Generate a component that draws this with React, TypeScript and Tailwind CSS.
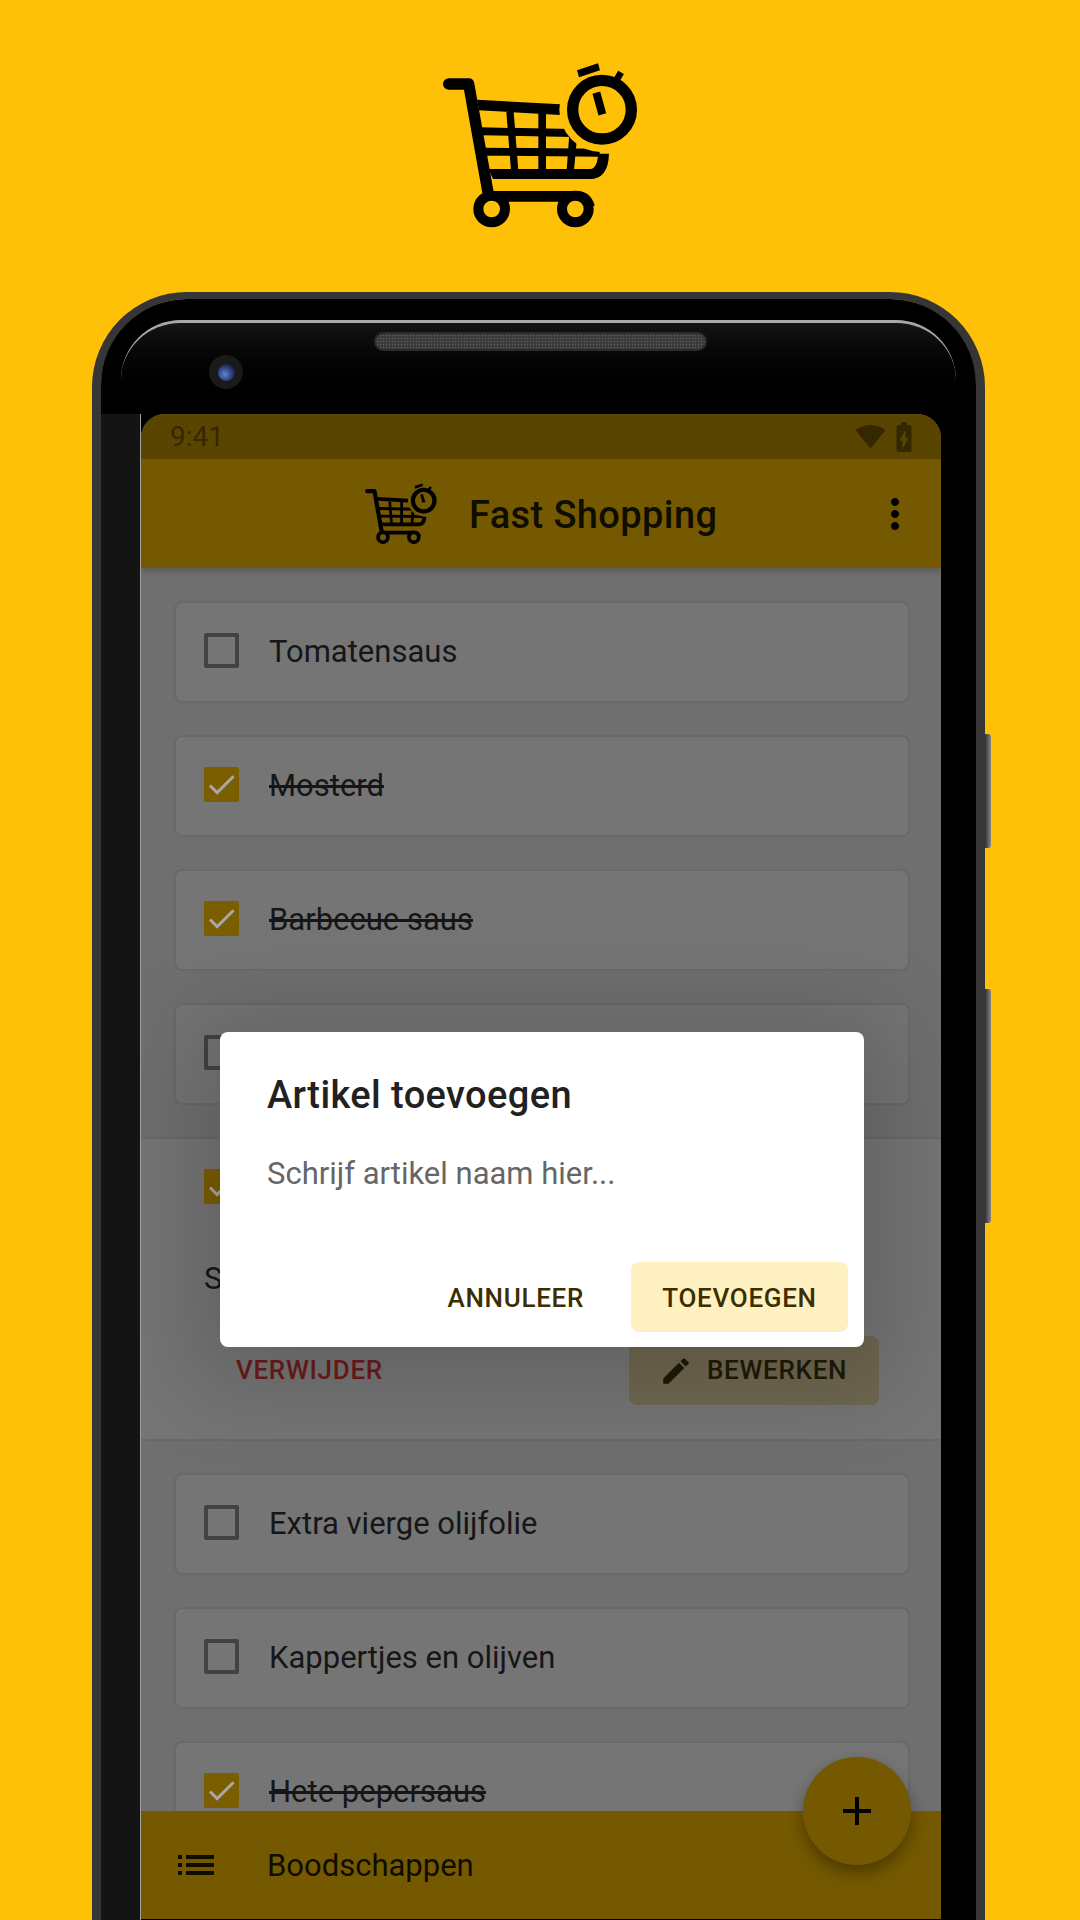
import { MdAdd, MdBatteryChargingFull, MdCheck, MdEdit, MdList, MdMoreVert, MdSignalWifi4Bar } from "react-icons/md";

const FONT = "font-['Roboto','Liberation_Sans',sans-serif]";

const ITEMS_TOP = [
  { label: "Tomatensaus", done: false },
  { label: "Mosterd", done: true },
  { label: "Barbecue saus", done: true },
  { label: "", done: false },
];

const ITEMS_BOTTOM = [
  { label: "Extra vierge olijfolie", done: false },
  { label: "Kappertjes en olijven", done: false },
  { label: "Hete pepersaus", done: true },
];

function Logo({ width, bg, className }: { width: number; bg: string; className?: string }) {
  return (
    <svg viewBox="130 65 585 500" width={width} height={(width * 500) / 585} className={className}>
      <path d="M147 131H207L266 462" fill="none" stroke="#000" strokeWidth="34" strokeLinecap="round" strokeLinejoin="round" />
      <path d="M232 178L482 192V224L238 210Z" fill="#000" />
      <path d="M243 261L560 267V291L248 285Z" fill="#000" />
      <path d="M255 322L600 325V349L258 346Z" fill="#000" />
      <path d="M320 215L342 215L356 390H334Z" fill="#000" />
      <path d="M416 215H439V390H416Z" fill="#000" />
      <path d="M509 280H533L523 390H501Z" fill="#000" />
      <path d="M266 386H572Q592 385 596 340H628Q626 416 570 416H280Z" fill="#000" />
      <path d="M266 468H532Q560 468 570 500" fill="none" stroke="#000" strokeWidth="32" />
      <circle cx="276" cy="506" r="40" fill={bg} stroke="#000" strokeWidth="30" />
      <circle cx="527" cy="506" r="40" fill={bg} stroke="#000" strokeWidth="30" />
      <circle cx="607" cy="208" r="128" fill={bg} />
      <circle cx="607" cy="208" r="88" fill="none" stroke="#000" strokeWidth="34" />
      <path d="M532 90L595 69L601 90L538 111Z" fill="#000" />
      <path d="M650 120L664 96" stroke="#000" strokeWidth="20" />
      <path d="M590 157L608 222" stroke="#000" strokeWidth="24" />
    </svg>
  );
}

function Checkbox({ done, className = "" }: { done: boolean; className?: string }) {
  if (done) {
    return (
      <span className={`flex h-[35px] w-[35px] shrink-0 items-center justify-center rounded-[2px] bg-[#7b5e00] text-[#a8a8a8] ${className}`}>
        <MdCheck size={37} />
      </span>
    );
  }
  return <span className={`h-[35px] w-[35px] shrink-0 rounded-[2px] border-[4px] border-[#424242] ${className}`} />;
}

function ItemCard({ label, done }: { label: string; done: boolean }) {
  return (
    <div className="flex h-[102px] shrink-0 items-center gap-[30px] rounded-[8px] border-2 border-[#696969] bg-[#757575] pl-[28px]">
      <Checkbox done={done} className="mb-[3px]" />
      <span className={`text-[31px] text-[#161616] ${done ? "line-through" : ""}`}>{label}</span>
    </div>
  );
}

function Screen() {
  return (
    <div className="relative flex h-full w-[800px] shrink-0 flex-col overflow-hidden rounded-t-[24px] bg-[#6f6f6f]">
      <div className="flex h-[45px] shrink-0 items-center justify-between bg-[#594500] pl-[29px] pr-[25px] text-[#332800]">
        <span className="text-[28px]">9:41</span>
        <span className="flex items-center gap-[6px]">
          <MdSignalWifi4Bar size={31} />
          <MdBatteryChargingFull size={36} className="-mx-[6px]" />
        </span>
      </div>
      <div className="relative z-10 flex h-[109px] shrink-0 items-center bg-[#755900] pl-[224px] pr-[22px] shadow-[0_3px_6px_rgba(0,0,0,0.2)]">
        <Logo width={72} bg="#755900" />
        <span className="ml-[32px] pt-[3px] text-[38px] font-medium tracking-[0.4px] text-[#0f0c00]">Fast Shopping</span>
        <MdMoreVert size={48} className="ml-auto text-black" />
      </div>
      <div className="flex min-h-0 flex-1 flex-col overflow-hidden pt-[33px]">
        <div className="flex flex-col gap-[32px] pl-[33px] pr-[31px]">
          {ITEMS_TOP.map((item, i) => (
            <ItemCard key={i} label={item.label} done={item.done} />
          ))}
        </div>
        <div className="mt-[32px] flex h-[304px] shrink-0 flex-col border-y-2 border-[#696969] bg-[#757575] pl-[63px] pr-[62px] pt-[30px]">
          <Checkbox done />
          <span className="mt-[56px] text-[31px] leading-[38px] text-[#161616]">S</span>
          <div className="mt-[38px] flex h-[69px] items-center justify-between">
            <span className="pl-[32px] text-[26px] font-medium tracking-[0.7px] text-[#6e1a1a]">VERWIJDER</span>
            <span className="flex h-[69px] w-[250px] items-center rounded-[8px] bg-[#6f6750] pl-[30px] text-[26px] font-medium tracking-[0.7px] text-[#1f1a08]">
              <MdEdit size={34} />
              <span className="ml-[14px]">BEWERKEN</span>
            </span>
          </div>
        </div>
        <div className="mt-[32px] flex flex-col gap-[32px] pl-[33px] pr-[31px]">
          {ITEMS_BOTTOM.map((item) => (
            <ItemCard key={item.label} label={item.label} done={item.done} />
          ))}
        </div>
      </div>
      <div className="z-10 flex h-[108px] shrink-0 items-center bg-[#755900] pl-[31px] text-[#0f0c00]">
        <MdList size={48} />
        <span className="ml-[47px] pt-[2px] text-[31px]">Boodschappen</span>
      </div>
      <div className="h-px shrink-0 bg-black" />
      <div className="absolute left-[662px] top-[1343px] z-20 flex h-[108px] w-[108px] items-center justify-center rounded-full bg-[#755900] text-black shadow-[0_8px_16px_rgba(0,0,0,0.35)]">
        <MdAdd size={48} />
      </div>
      <div className="absolute left-[79px] top-[618px] z-30 flex h-[315px] w-[644px] flex-col rounded-[8px] bg-white pl-[47px] shadow-[0_12px_90px_30px_rgba(0,0,0,0.16)]">
        <h2 className="mt-[39px] text-[38px] font-medium leading-[48px] tracking-[0.4px] text-[#212121]">Artikel toevoegen</h2>
        <p className="mt-[36px] text-[31px] leading-[38px] text-[#666666]">Schrijf artikel naam hier...</p>
        <div className="mt-auto mb-[15px] flex justify-end gap-[16px] pr-[16px] text-[26px] font-medium tracking-[0.7px] text-[#3d2e00]">
          <span className="flex h-[70px] items-center px-[31px] pt-[3px]">ANNULEER</span>
          <span className="flex h-[70px] w-[217px] items-center justify-center rounded-[8px] bg-[#fff0c1] pt-[3px]">TOEVOEGEN</span>
        </div>
      </div>
    </div>
  );
}

export default function App() {
  return (
    <div className={`h-[1920px] w-[1080px] overflow-hidden bg-[#FFC107] ${FONT}`}>
      <div className="flex h-[292px] justify-center pt-[62px] pl-[1px]">
        <Logo width={195} bg="#FFC107" />
      </div>
      <div className="relative ml-[92px] h-[1628px] w-[893px] rounded-t-[95px] border-x-[9px] border-t-[7px] border-[#363636]">
        <span className="absolute -right-[15px] top-[435px] h-[114px] w-[6px] rounded-r-[3px] bg-gradient-to-r from-[#333333] to-[#8c868c]" />
        <span className="absolute -right-[15px] top-[690px] h-[234px] w-[6px] rounded-r-[3px] bg-gradient-to-r from-[#333333] to-[#8c868c]" />
        <div className="flex h-full flex-col overflow-hidden rounded-t-[86px] bg-black">
          <div className="flex h-[115px] shrink-0 justify-center pt-[21px]">
            <div className="relative h-[94px] w-[835px] rounded-t-[60px] border-t-[3px] border-[#a8a8a8] bg-gradient-to-b from-[#141414] to-[#000000]">
              <span className="absolute left-[253px] top-[9px] h-[19px] w-[333px] rounded-full border-2 border-[#2c2c2c] bg-[#3c3c3c] bg-[radial-gradient(#666666_1px,transparent_1px)] bg-[size:3px_3px]" />
              <span className="absolute left-[88px] top-[32px] flex h-[34px] w-[34px] items-center justify-center rounded-full bg-[#1a1a1a]">
                <span className="h-[17px] w-[17px] rounded-full bg-[radial-gradient(circle_at_40%_60%,#5f82dc,#1a2350_70%)]" />
              </span>
            </div>
          </div>
          <div className="flex min-h-0 flex-1">
            <div className="w-[40px] shrink-0 border-r border-[#a0a0a0] bg-[#141414]" />
            <Screen />
          </div>
        </div>
      </div>
    </div>
  );
}
